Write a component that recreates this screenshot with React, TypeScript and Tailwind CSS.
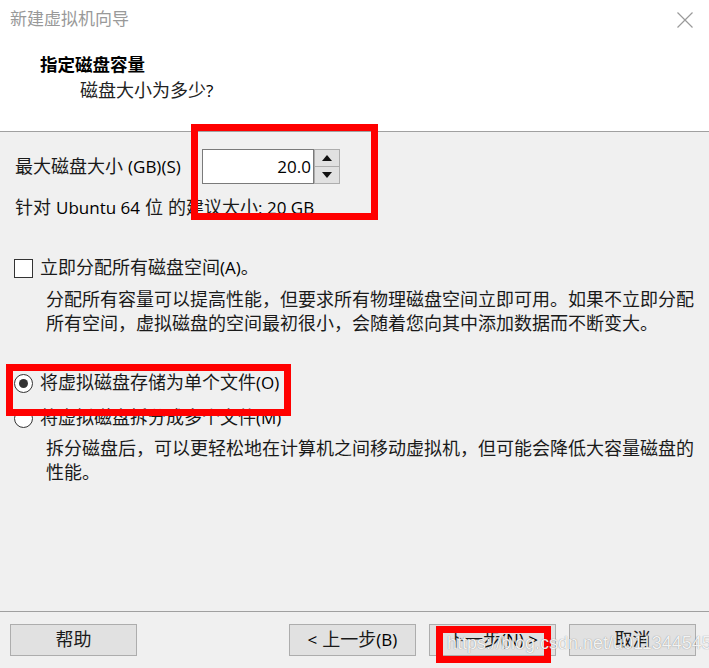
import type { ReactNode } from 'react';

const FONT = '[font-family:"Liberation_Sans","Noto_Sans_CJK_SC",sans-serif]';

// latin runs use a segoe-like face, a bit smaller than the CJK glyphs
function L({ children }: { children: ReactNode }) {
  return <span className="text-[17px] text-black [font-family:'Open_Sans',sans-serif]">{children}</span>;
}

function Radio({ checked }: { checked?: boolean }) {
  return (
    <span className="w-[19px] h-[19px] rounded-full border border-[#333] bg-white flex items-center justify-center shrink-0">
      {checked && <span className="w-[9px] h-[9px] rounded-full bg-[#333]" />}
    </span>
  );
}

function DlgButton({ children }: { children: ReactNode }) {
  return (
    <button className="w-[127px] h-[32px] bg-[#e1e1e1] border border-[#adadad] text-[18px] text-[#1a1a1a] flex items-center justify-center whitespace-nowrap">
      {children}
    </button>
  );
}

function Spinner() {
  return (
    <div className="flex">
      <div className="w-[112px] h-[35px] bg-white border border-[#7a7a7a] flex items-center justify-end pr-[2px]">
        <L>20.0</L>
      </div>
      <div className="w-[26px] h-[35px] flex flex-col border border-[#adadad] bg-[#e1e1e1]">
        <div className="flex-1 flex items-center justify-center border-b border-[#adadad]">
          <svg width="10" height="6" viewBox="0 0 10 6">
            <path d="M0 6 L5 0 L10 6 Z" fill="#111" />
          </svg>
        </div>
        <div className="flex-1 flex items-center justify-center">
          <svg width="10" height="6" viewBox="0 0 10 6">
            <path d="M0 0 L5 6 L10 0 Z" fill="#111" />
          </svg>
        </div>
      </div>
    </div>
  );
}

export default function App() {
  return (
    <div className={`relative w-[709px] h-[668px] bg-[#f0f0f0] flex flex-col overflow-hidden ${FONT} text-[#1a1a1a]`}>
      {/* header */}
      <div className="h-[132px] bg-white border-b border-[#a0a0a0] shrink-0">
        <div className="h-[40px] flex items-center justify-between pl-[10px] pr-[16px]">
          <span className="text-[17px] text-[#999]">新建虚拟机向导</span>
          <svg width="16" height="16" viewBox="0 0 16 16">
            <path d="M0.5 0.5 L15.5 15.5 M15.5 0.5 L0.5 15.5" stroke="#9a9a9a" strokeWidth="1.2" />
          </svg>
        </div>
        <div className="mt-[13px] pl-[40px] leading-[24px] text-[17.5px] font-bold text-black">指定磁盘容量</div>
        <div className="mt-[2px] pl-[80px] leading-[24px] text-[18px] text-[#222]">
          磁盘大小为多少<L>?</L>
        </div>
      </div>

      {/* body */}
      <div className="flex flex-col text-[18px]">
        <div className="mt-[17px] flex items-center">
          <div className="w-[202px] pl-[15px] leading-[24px] whitespace-nowrap">
            最大磁盘大小 <L>(GB)(S)</L>
          </div>
          <Spinner />
        </div>

        <div className="mt-[12px] pl-[15px] leading-[24px] whitespace-nowrap">
          针对 <L>Ubuntu 64</L> 位 的建议大小<L>: 20 GB</L>
        </div>

        <div className="mt-[36px] pl-[14px] flex items-center gap-[7px] leading-[24px]">
          <span className="w-[19px] h-[19px] border-[1.5px] border-[#333] bg-white shrink-0" />
          <span>
            立即分配所有磁盘空间<L>(A)</L>。
          </span>
        </div>

        <p className="mt-[8px] pl-[46px] leading-[24px] whitespace-nowrap">
          分配所有容量可以提高性能，但要求所有物理磁盘空间立即可用。如果不立即分配
          <br />
          所有空间，虚拟磁盘的空间最初很小，会随着您向其中添加数据而不断变大。
        </p>

        <div className="mt-[35px] pl-[14px] flex items-center gap-[7px] leading-[24px]">
          <Radio checked />
          <span>
            将虚拟磁盘存储为单个文件<L>(O)</L>
          </span>
        </div>

        <div className="mt-[11px] pl-[14px] flex items-center gap-[7px] leading-[24px]">
          <Radio />
          <span>
            将虚拟磁盘拆分成多个文件<L>(M)</L>
          </span>
        </div>

        <p className="mt-[7px] pl-[46px] leading-[24px] whitespace-nowrap">
          拆分磁盘后，可以更轻松地在计算机之间移动虚拟机，但可能会降低大容量磁盘的
          <br />
          性能。
        </p>
      </div>

      <div className="flex-1" />

      {/* footer */}
      <div className="h-[57px] border-t border-[#a0a0a0] shrink-0 pt-[12px] pl-[10px] pr-[13px] flex items-start justify-between">
        <DlgButton>帮助</DlgButton>
        <div className="flex gap-[13px]">
          <DlgButton>
            <L>&lt;</L>&nbsp;上一步<L>(B)</L>
          </DlgButton>
          <DlgButton>
            下一步<L>(N) &gt;</L>
          </DlgButton>
          <DlgButton>取消</DlgButton>
        </div>
      </div>

      {/* annotation boxes drawn over the screenshot */}
      <div className="absolute left-[191px] top-[124px] w-[187px] h-[96px] border-[7px] border-[#ff0000]" />
      <div className="absolute left-[6px] top-[364px] w-[285px] h-[52px] border-[7px] border-[#ff0000]" />
      <div className="absolute left-[436px] top-[626px] w-[115px] h-[37px] border-[7px] border-[#ff0000]" />

      {/* watermark */}
      <div className="absolute left-[447px] top-[630px] text-[18px] [font-family:'Liberation_Sans',sans-serif] text-white/90 [text-shadow:0_0_1px_rgba(0,0,0,0.5)] pointer-events-none whitespace-nowrap">
        https://blog.csdn.net/u011344545
      </div>
    </div>
  );
}
